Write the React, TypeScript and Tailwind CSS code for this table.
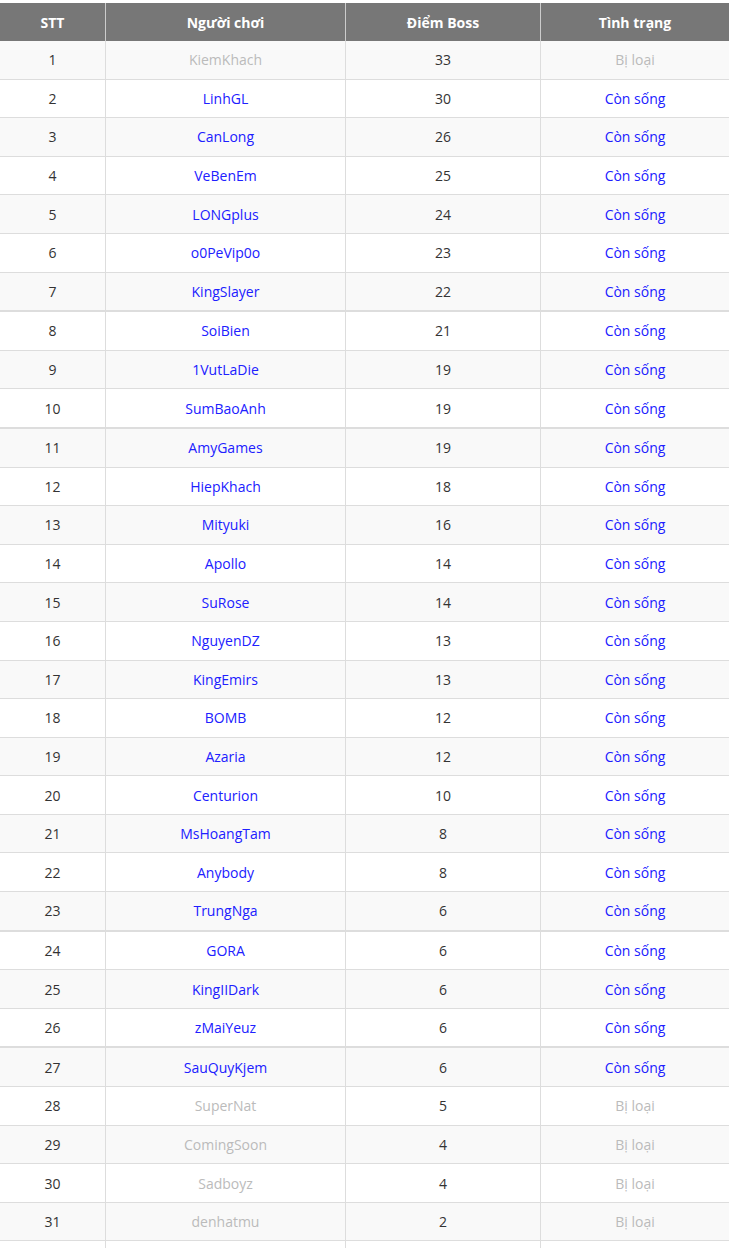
type Row = {
  name: string;
  score: number;
  alive: boolean;
};

const rows: Row[] = [
  { name: "KiemKhach", score: 33, alive: false },
  { name: "LinhGL", score: 30, alive: true },
  { name: "CanLong", score: 26, alive: true },
  { name: "VeBenEm", score: 25, alive: true },
  { name: "LONGplus", score: 24, alive: true },
  { name: "o0PeVip0o", score: 23, alive: true },
  { name: "KingSlayer", score: 22, alive: true },
  { name: "SoiBien", score: 21, alive: true },
  { name: "1VutLaDie", score: 19, alive: true },
  { name: "SumBaoAnh", score: 19, alive: true },
  { name: "AmyGames", score: 19, alive: true },
  { name: "HiepKhach", score: 18, alive: true },
  { name: "Mityuki", score: 16, alive: true },
  { name: "Apollo", score: 14, alive: true },
  { name: "SuRose", score: 14, alive: true },
  { name: "NguyenDZ", score: 13, alive: true },
  { name: "KingEmirs", score: 13, alive: true },
  { name: "BOMB", score: 12, alive: true },
  { name: "Azaria", score: 12, alive: true },
  { name: "Centurion", score: 10, alive: true },
  { name: "MsHoangTam", score: 8, alive: true },
  { name: "Anybody", score: 8, alive: true },
  { name: "TrungNga", score: 6, alive: true },
  { name: "GORA", score: 6, alive: true },
  { name: "KingIIDark", score: 6, alive: true },
  { name: "zMaiYeuz", score: 6, alive: true },
  { name: "SauQuyKjem", score: 6, alive: true },
  { name: "SuperNat", score: 5, alive: false },
  { name: "ComingSoon", score: 4, alive: false },
  { name: "Sadboyz", score: 4, alive: false },
  { name: "denhatmu", score: 2, alive: false },
];

// hàng có viền dưới dày hơn (giống ảnh gốc)
const thick = [7, 10, 23, 26];

export default function App() {
  return (
    <div
      className="w-full bg-white pt-[3px] text-[14px] text-[#333]"
      style={{ fontFamily: '"Open Sans", "Noto Sans", sans-serif' }}
    >
      <div className="grid h-[38px] grid-cols-[106px_240px_195px_1fr] bg-[#777] font-bold text-white">
        <div className="flex items-center justify-center border-r border-[#ccc]">STT</div>
        <div className="flex items-center justify-center border-r border-[#ccc]">Người chơi</div>
        <div className="flex items-center justify-center border-r border-[#ccc]">Điểm Boss</div>
        <div className="flex items-center justify-center">Tình trạng</div>
      </div>

      {rows.map((row, i) => {
        const stt = i + 1;
        const isThick = thick.includes(stt);
        return (
          <div
            key={stt}
            className={`grid grid-cols-[106px_240px_195px_1fr] border-[#ddd] ${
              isThick ? "h-[39.6px] border-b-2" : "h-[38.6px] border-b"
            } ${i % 2 === 0 ? "bg-[#f9f9f9]" : "bg-white"}`}
          >
            <div className="flex items-center justify-center border-r border-[#ddd]">{stt}</div>
            <div
              className={`flex items-center justify-center border-r border-[#ddd] ${
                row.alive ? "text-[#2020ff]" : "text-[#bbb]"
              }`}
            >
              {row.name}
            </div>
            <div className="flex items-center justify-center border-r border-[#ddd]">{row.score}</div>
            <div
              className={`flex items-center justify-center ${
                row.alive ? "text-[#2020ff]" : "text-[#bbb]"
              }`}
            >
              {row.alive ? "Còn sống" : "Bị loại"}
            </div>
          </div>
        );
      })}

      {/* hàng tiếp theo bị cắt ở mép dưới */}
      <div className="grid h-[38.6px] grid-cols-[106px_240px_195px_1fr] bg-white">
        <div className="border-r border-[#ddd]" />
        <div className="border-r border-[#ddd]" />
        <div className="border-r border-[#ddd]" />
        <div />
      </div>
    </div>
  );
}
